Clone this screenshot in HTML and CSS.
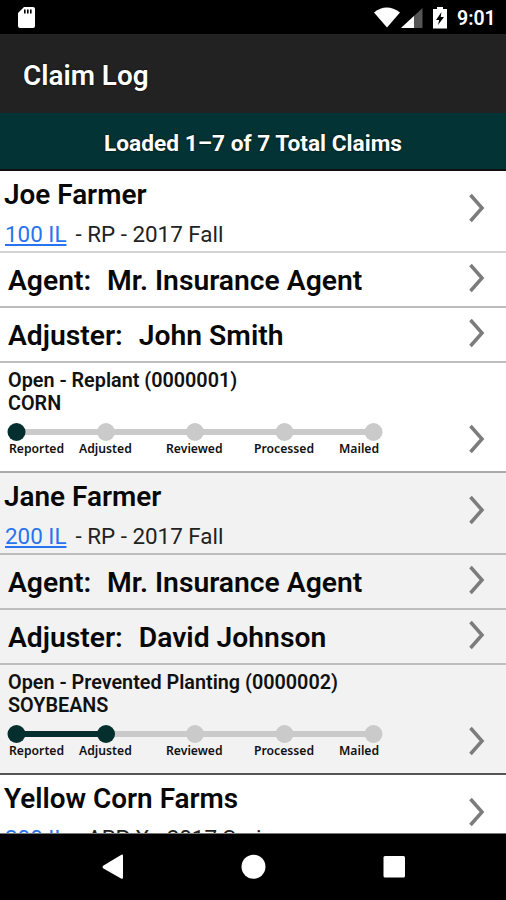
FILE: index.html
```html
<!DOCTYPE html>
<html lang="en">
<head>
<meta charset="utf-8">
<title>Claim Log</title>
<link rel="stylesheet" href="styles.css">
</head>
<body>
<svg width="0" height="0" class="defs">
  <symbol id="chevron" viewBox="0 0 18 32"><path d="M2.500 3 14 16 2.500 29" fill="none" stroke="#7c7c7c" stroke-width="3.500"/></symbol>
</svg>
<div class="screen">
  <div class="statusbar">
    <svg class="sd" width="17" height="22" viewBox="0 0 17 22"><path d="M6 0H15Q17 0 17 2V19Q17 21 15 21H2Q0 21 0 19V6Z" fill="#fff"/><path d="M6 2.500h1.600v4h-1.600zM9 2.500h1.600v4h-1.600zM12 2.500h1.600v4h-1.600z" fill="#000"/></svg>
    <svg class="signals" width="74" height="24" viewBox="0 0 74 24">
      <path d="M0 5.500Q12.500-4.500 26 5.500L13 20.500Z" fill="#fff"/>
      <path d="M48.500 1V21H27Z" fill="#555"/><path d="M40 9V21H27Z" fill="#fff"/>
      <path d="M59 2H63V0H69V2H73V21.500H59Z" fill="#fff"/><path d="M67.500 5 62 13h3.200l-1.200 5 6-8h-3.300z" fill="#000"/>
    </svg>
    <span class="clock">9:01</span>
  </div>
  <header class="appbar"><h1>Claim Log</h1></header>
  <div class="banner">Loaded 1–7 of 7 Total Claims</div>
  <main class="claims">
    <section class="claim">
      <div class="row farmer"><div><h2>Joe Farmer</h2><p><a>100 IL</a><span>- RP - 2017 Fall</span></p></div><svg class="chev"><use href="#chevron"/></svg></div>
      <div class="row person"><span class="role">Agent:</span><span class="who">Mr. Insurance Agent</span><svg class="chev"><use href="#chevron"/></svg></div>
      <div class="row person"><span class="role">Adjuster:</span><span class="who">John Smith</span><svg class="chev"><use href="#chevron"/></svg></div>
      <div class="row progress">
        <div>
          <h3>Open - Replant (0000001)</h3><h3>CORN</h3>
          <svg class="track" width="390" height="18" viewBox="0 0 390 18"><path d="M16.500 9H374" stroke="#cacaca" stroke-width="6"/><g fill="#cacaca"><circle cx="106" cy="9" r="9"/><circle cx="195" cy="9" r="9"/><circle cx="284.500" cy="9" r="9"/><circle cx="373.500" cy="9" r="9"/></g><circle cx="16.500" cy="9" r="9" fill="#042f2e"/></svg>
          <div class="steps"><span>Reported</span><span>Adjusted</span><span>Reviewed</span><span>Processed</span><span>Mailed</span></div>
        </div>
        <svg class="chev"><use href="#chevron"/></svg>
      </div>
    </section>
    <section class="claim alt">
      <div class="row farmer"><div><h2>Jane Farmer</h2><p><a>200 IL</a><span>- RP - 2017 Fall</span></p></div><svg class="chev"><use href="#chevron"/></svg></div>
      <div class="row person"><span class="role">Agent:</span><span class="who">Mr. Insurance Agent</span><svg class="chev"><use href="#chevron"/></svg></div>
      <div class="row person"><span class="role">Adjuster:</span><span class="who">David Johnson</span><svg class="chev"><use href="#chevron"/></svg></div>
      <div class="row progress">
        <div>
          <h3>Open - Prevented Planting (0000002)</h3><h3>SOYBEANS</h3>
          <svg class="track" width="390" height="18" viewBox="0 0 390 18"><path d="M106 9H374" stroke="#cacaca" stroke-width="6"/><g fill="#cacaca"><circle cx="195" cy="9" r="9"/><circle cx="284.500" cy="9" r="9"/><circle cx="373.500" cy="9" r="9"/></g><path d="M16.500 9H106" stroke="#042f2e" stroke-width="6"/><g fill="#042f2e"><circle cx="16.500" cy="9" r="9"/><circle cx="106" cy="9" r="9"/></g></svg>
          <div class="steps"><span>Reported</span><span>Adjusted</span><span>Reviewed</span><span>Processed</span><span>Mailed</span></div>
        </div>
        <svg class="chev"><use href="#chevron"/></svg>
      </div>
    </section>
    <section class="claim">
      <div class="row farmer"><div><h2>Yellow Corn Farms</h2><p><a>300 IL</a><span>- ARP X - 2017 Spring</span></p></div><svg class="chev"><use href="#chevron"/></svg></div>
    </section>
  </main>
  <nav class="navbar">
    <svg width="506" height="66" viewBox="0 0 506 66"><g fill="#fff"><path d="M123 21.500V43.500Q123 45.500 121 44.500L103.500 34.500Q101.500 33 103.500 31.500L121 21Q123 20 123 21.500Z"/><circle cx="253.500" cy="32.700" r="12"/><rect x="383.500" y="22" width="21.500" height="21.500" rx="1.500"/></g></svg>
  </nav>
</div>
</body>
</html>
```
FILE: styles.css
```css
* { box-sizing: border-box; }
body { margin: 0; background: #000; font-family: Roboto, sans-serif; color: #111; }
h1, h2, h3, p { margin: 0; white-space: nowrap; }
svg { display: block; flex: none; }
.defs { position: absolute; }
.screen { width: 506px; height: 900px; display: flex; flex-direction: column; overflow: hidden; }
.statusbar { height: 34px; flex: none; display: flex; align-items: flex-start; padding: 7px 0 0 18px; color: #fff; }
.signals { margin-left: 339px; }
.clock { margin-left: 9px; font-size: 19.5px; line-height: 23px; font-weight: 600; }
.appbar { height: 79px; flex: none; background: #222; padding: 23px 0 0 23px; }
.appbar h1 { color: #fff; font-size: 27.9px; line-height: 37px; font-weight: 600; text-shadow: 0 0 2px #000; }
.banner { height: 58px; flex: none; background: #033334; border-bottom: 2px solid #101010; color: #fff; font-size: 22.7px; line-height: 61px; font-weight: 700; text-align: center; text-shadow: 0 0 2px #000; white-space: nowrap; }
.claims { height: 663px; flex: none; overflow: hidden; background: #fff; border-bottom: 1px solid #777; }
.claim { height: 302px; background: #fff; }
.alt { background: #f2f2f2; }
.row { display: flex; justify-content: space-between; border-bottom: 2px solid #bdbdbd; padding-right: 20px; }
.farmer { height: 82px; padding-top: 6px; border-color: #d3d3d3; }
.alt .farmer { border-color: #bdbdbd; }
.chev { width: 18px; height: 32px; margin-left: auto; }
.farmer .chev { margin-top: 15px; }
h2 { padding-left: 4px; font-size: 27.9px; line-height: 36px; font-weight: 600; color: #080808; }
.farmer p { display: flex; gap: 9px; padding-left: 5px; font-size: 22.4px; line-height: 42px; color: #222; }
.farmer a { color: #2674f0; text-decoration: underline; text-decoration-thickness: 1.5px; text-underline-offset: 2px; }
.person { height: 55px; padding-left: 8px; font-size: 28.25px; line-height: 55px; font-weight: 600; white-space: nowrap; color: #080808; }
.person .chev { margin-top: 9px; }
.who { margin-left: 16px; }
.progress { height: 110px; padding-top: 6px; border-color: #aaa; }
.alt .progress { border-color: #555; }
h3 { padding-left: 8px; font-size: 19.8px; line-height: 23px; font-weight: 600; }
.track { margin-top: 8px; }
.steps { display: grid; grid-template-columns: 70px 87px 88px 85px 50px; padding-left: 9px; font-family: "Noto Sans", sans-serif; font-size: 12.2px; line-height: 16px; font-weight: 600; }
.progress .chev { margin-top: 54px; }
```
